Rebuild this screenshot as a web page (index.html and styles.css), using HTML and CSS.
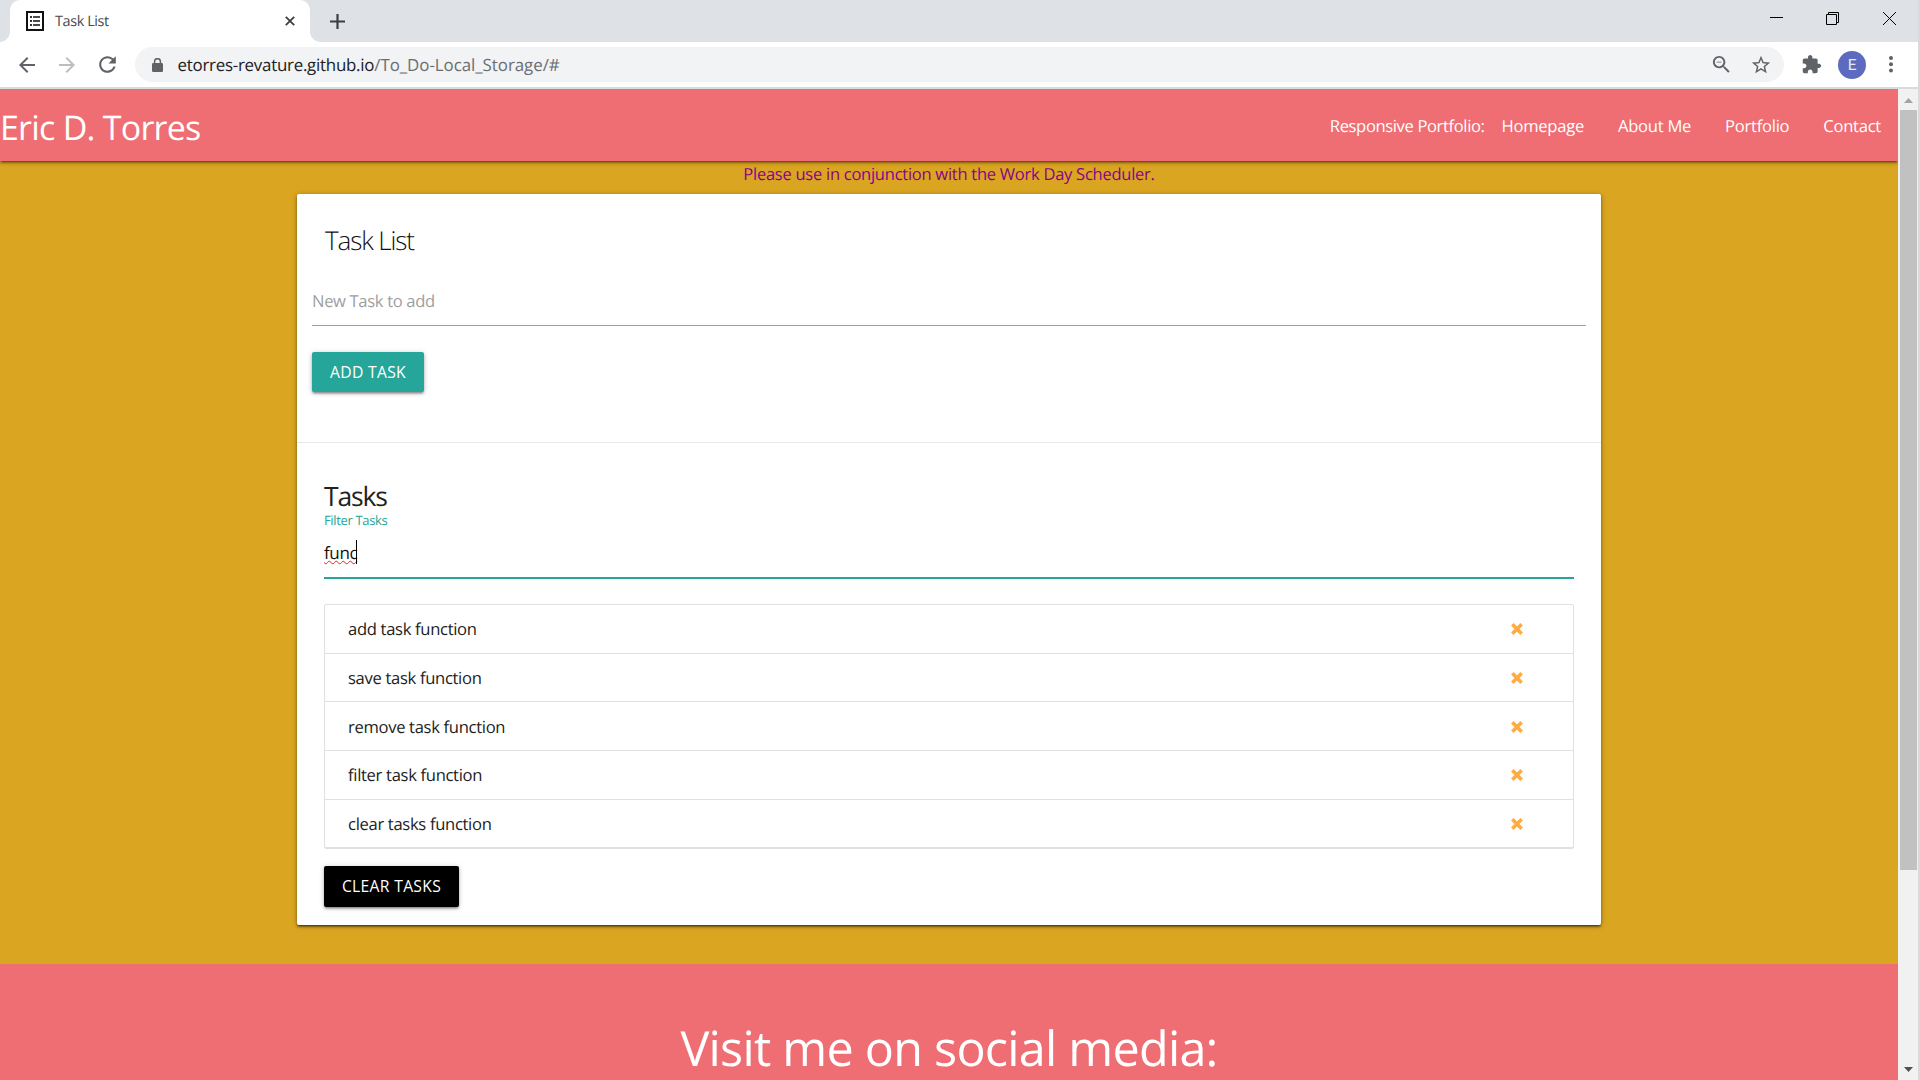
FILE: index.html
```
<!DOCTYPE html>
<html lang="en">
<head>
<meta charset="utf-8">
<title>Task List</title>
<link rel="stylesheet" href="styles.css">
</head>
<body>
<svg class="defs" width="0" height="0">
  <symbol id="times" viewBox="0 0 12 12"><path d="M2.6 2.6l6.8 6.8M9.4 2.6l-6.8 6.8" stroke="#ffab40" stroke-width="3.6" stroke-linecap="square" stroke-linejoin="round"/></symbol>
</svg>
<div class="window">
  <header class="tabstrip">
    <div class="tab">
      <svg class="favicon" width="18" height="20" viewBox="0 0 18 20"><rect x="1" y="1" width="16" height="18" fill="#fff" stroke="#111" stroke-width="2"/><path d="M4 5h2v2H4zM4 9h2v2H4zM4 13h2v2H4z" fill="#333"/><path d="M7 6h7M7 10h7M7 14h7" stroke="#111" stroke-width="1.5"/></svg>
      <span class="tab-title">Task List</span>
      <svg class="tab-close" width="10" height="10" viewBox="0 0 10 10"><path d="M.8.8l8.4 8.4M9.2.8L.8 9.2" stroke="#3c4043" stroke-width="1.8"/></svg>
    </div>
    <svg class="new-tab" width="15" height="15" viewBox="0 0 15 15"><path d="M7.5 0v15M0 7.5h15" stroke="#3c4043" stroke-width="2.2"/></svg>
    <div class="controls">
      <svg width="13" height="13" viewBox="0 0 13 13"><path d="M0 5.5h13" stroke="#000"/></svg>
      <svg width="13" height="13" viewBox="0 0 13 13" fill="none" stroke="#000"><path d="M.5 2.5h10v10H.5zM2.5 2.5v-2h10v10h-2"/></svg>
      <svg width="13" height="13" viewBox="0 0 13 13"><path d="M0 0l13 13M13 0L0 13" stroke="#000"/></svg>
    </div>
  </header>
  <div class="toolbar">
    <svg class="nav-icon" width="24" height="24" viewBox="0 0 24 24" fill="#5f6368"><path d="M20 11H7.83l5.59-5.59L12 4l-8 8 8 8 1.41-1.41L7.83 13H20v-2z"/></svg>
    <svg class="nav-icon" width="24" height="24" viewBox="0 0 24 24" fill="#bcbec1"><path d="M12 4l-1.41 1.41L16.17 11H4v2h12.17l-5.58 5.59L12 20l8-8z"/></svg>
    <svg class="nav-icon" width="25" height="25" viewBox="0 0 24 24" fill="#5f6368"><path d="M17.65 6.35C16.2 4.9 14.21 4 12 4c-4.42 0-7.99 3.58-7.99 8s3.57 8 7.99 8c3.73 0 6.84-2.55 7.73-6h-2.08c-.82 2.33-3.04 4-5.65 4-3.31 0-6-2.69-6-6s2.69-6 6-6c1.66 0 3.14.69 4.22 1.78L13 11h7V4l-2.35 2.35z"/></svg>
    <div class="omnibox">
      <svg class="lock" width="11" height="14" viewBox="0 0 11 14"><path d="M2.6 6V3.6a2.9 2.9 0 0 1 5.8 0V6" fill="none" stroke="#5f6368" stroke-width="1.5"/><rect y="5" width="11" height="9" rx="1.2" fill="#5f6368"/></svg>
      <span class="url"><span class="host">etorres-revature.github.io</span><span class="path">/To_Do-Local_Storage/#</span></span>
      <svg class="zoom" width="23" height="23" viewBox="0 0 24 24" fill="#5f6368"><path d="M15.5 14h-.79l-.28-.27C15.41 12.59 16 11.11 16 9.5 16 5.91 13.09 3 9.5 3S3 5.91 3 9.5 5.91 16 9.5 16c1.61 0 3.09-.59 4.23-1.57l.27.28v.79l5 4.99L20.49 19l-4.99-5zm-6 0C7.01 14 5 11.99 5 9.5S7.01 5 9.5 5 14 7.01 14 9.5 11.99 14 9.5 14zM7 9h5v1H7z"/></svg>
      <svg class="star" width="22" height="22" viewBox="0 0 24 24" fill="#5f6368"><path d="M22 9.24l-7.19-.62L12 2 9.19 8.63 2 9.24l5.46 4.73L5.82 21 12 17.27 18.18 21l-1.63-7.03L22 9.24zM12 15.4l-3.76 2.27 1-4.28-3.32-2.88 4.38-.38L12 6.1l1.71 4.04 4.38.38-3.32 2.88 1 4.28L12 15.4z"/></svg>
    </div>
    <svg class="ext" width="21" height="21" viewBox="0 0 24 24" fill="#5f6368"><path d="M20.5 11H19V7c0-1.1-.9-2-2-2h-4V3.5C13 2.12 11.88 1 10.5 1S8 2.12 8 3.5V5H4c-1.1 0-1.99.9-1.99 2v3.8H3.5c1.49 0 2.7 1.21 2.7 2.7s-1.21 2.7-2.7 2.7H2V20c0 1.1.9 2 2 2h3.8v-1.5c0-1.49 1.21-2.7 2.7-2.7 1.49 0 2.7 1.21 2.7 2.7V22H17c1.1 0 2-.9 2-2v-4h1.5c1.38 0 2.5-1.12 2.5-2.5S21.88 11 20.5 11z"/></svg>
    <span class="avatar">E</span>
    <svg class="menu" width="4" height="17" viewBox="0 0 4 17" fill="#5f6368"><circle cx="2" cy="2" r="2"/><circle cx="2" cy="8.3" r="2"/><circle cx="2" cy="14.6" r="2"/></svg>
  </div>
  <div class="viewport">
    <div class="page">
      <nav class="navbar">
        <span class="brand">Eric D. Torres</span>
        <ul class="links">
          <li class="lead">Responsive Portfolio:</li>
          <li class="first">Homepage</li>
          <li>About Me</li>
          <li>Portfolio</li>
          <li>Contact</li>
        </ul>
      </nav>
      <p class="notice">Please use in conjunction with the Work Day Scheduler.</p>
      <main class="card">
        <section class="add">
          <h1 class="title">Task List</h1>
          <div class="field">New Task to add</div>
          <button class="btn btn-add">Add Task</button>
        </section>
        <section class="tasks">
          <h2 class="subtitle">Tasks</h2>
          <div class="filter-label">Filter Tasks</div>
          <div class="filter"><span class="typed">func</span><span class="caret"></span></div>
          <ul class="list">
            <li><span>add task function</span><svg width="12" height="12"><use href="#times"/></svg></li>
            <li><span>save task function</span><svg width="12" height="12"><use href="#times"/></svg></li>
            <li><span>remove task function</span><svg width="12" height="12"><use href="#times"/></svg></li>
            <li><span>filter task function</span><svg width="12" height="12"><use href="#times"/></svg></li>
            <li><span>clear tasks function</span><svg width="12" height="12"><use href="#times"/></svg></li>
          </ul>
          <button class="btn btn-clear">Clear Tasks</button>
        </section>
      </main>
      <footer class="footer">Visit me on social media:</footer>
    </div>
    <div class="scrollbar">
      <svg class="up" width="9" height="5" viewBox="0 0 9 5"><path d="M0 5L4.5 0 9 5z" fill="#a3a3a3"/></svg>
      <div class="thumb"></div>
      <svg class="down" width="9" height="5" viewBox="0 0 9 5"><path d="M0 0l4.5 5L9 0z" fill="#505050"/></svg>
    </div>
  </div>
</div>
</body>
</html>
```
FILE: styles.css
```
* { box-sizing: border-box; margin: 0; padding: 0; }
body {
  width: 1920px; height: 1080px; overflow: hidden; background: #d9dadb;
  font: 400 16.6px/1.5 "Open Sans", "Noto Sans", sans-serif;
  letter-spacing: -0.35px; text-rendering: geometricPrecision;
}
ul { list-style: none; }
svg { display: block; flex: none; }
.defs { position: absolute; }
.window { width: 1918px; height: 1080px; display: flex; flex-direction: column; background: #fff; }

.tabstrip { height: 42px; flex: none; display: flex; background: #dee1e6; padding-left: 10px; }
.tab {
  width: 300px; height: 42px; background: #fff; border-radius: 10px 10px 0 0; position: relative;
  display: flex; align-items: center; padding: 0 15px 0 16px;
}
.tab::before, .tab::after { content: ""; position: absolute; bottom: 0; width: 10px; height: 10px; }
.tab::before { left: -10px; background: radial-gradient(circle at 0 0, transparent 9.5px, #fff 10px); }
.tab::after { right: -10px; background: radial-gradient(circle at 100% 0, transparent 9.5px, #fff 10px); }
.tab-title { font-size: 14.4px; line-height: 43px; letter-spacing: -0.38px; color: #45494d; margin-left: 11px; flex: 1; }
.new-tab { margin: 13.5px 0 0 20px; }
.controls { margin: 12px 22px 0 auto; display: flex; }
.controls svg + svg { margin-left: 43px; }
.controls svg:last-child { margin-left: 44px; }

.toolbar { height: 47px; flex: none; display: flex; align-items: center; padding: 0 25px 2px 15px; box-shadow: inset 0 -2px #d8dadd; }
.nav-icon { margin-right: 16px; }
.nav-icon:nth-child(3) { margin-right: 15px; }
.omnibox { flex: 1; height: 35px; border-radius: 17.5px; background: #f1f3f4; display: flex; align-items: center; padding: 0 12px 0 17px; }
.url { flex: 1; margin-left: 14.5px; font-size: 16.9px; line-height: 34px; color: #6a6e72; }
.host { color: #202124; letter-spacing: -0.25px; }
.path { letter-spacing: -0.05px; }
.zoom { margin-right: 17.5px; }
.ext { margin: 0 12px 0 17px; }
.avatar {
  width: 28px; height: 28px; margin: 0 23px 0 4px; border-radius: 50%; background: #5c6bc0; color: #e8eaf6;
  font: 15.5px/28px Roboto, sans-serif; text-align: center;
}

.viewport { flex: 1; display: flex; min-height: 0; }
.page { width: 1898px; background: #daa520; display: flex; flex-direction: column; align-items: center; overflow: hidden; }
.navbar {
  width: 1898px; height: 72px; flex: none; display: flex; justify-content: space-between; align-items: center;
  background: #ee6e73; color: #fff; padding-right: 17px;
  box-shadow: 0 2px 2px rgba(0,0,0,.25), 0 3px 1px -2px rgba(0,0,0,.2), 0 1px 5px rgba(0,0,0,.3);
}
.brand { font-size: 34px; line-height: 70px; letter-spacing: -0.77px; padding-top: 3px; }
.links { display: flex; line-height: 73px; }
.links li { margin-left: 34px; letter-spacing: -0.27px; }
.links .lead { letter-spacing: -0.38px; }
.links .first { margin-left: 17px; }
.notice { line-height: 26px; color: #8b008b; letter-spacing: -0.3px; flex: none; }

.card {
  width: 1304px; height: 731px; flex: none; margin-top: 7px; background: #fff; border-radius: 2px;
  box-shadow: 0 2px 2px rgba(0,0,0,.3), 0 3px 1px -2px rgba(0,0,0,.25), 0 1px 5px rgba(0,0,0,.35);
}
.add { height: 249px; border-bottom: 1px solid #e8e8e8; padding: 28px 15px 0; }
.title { font-size: 26px; line-height: 36px; font-weight: 300; letter-spacing: -1.1px; color: #111; padding-left: 13px; }
.field { height: 44px; margin-top: 24px; border-bottom: 1px solid #9e9e9e; line-height: 37px; color: #9e9e9e; }
.btn {
  display: block; border: 0; border-radius: 2px; color: #fff; text-transform: uppercase;
  font: 400 15.7px/40px "Open Sans", sans-serif; letter-spacing: .3px; text-align: center;
  box-shadow: 0 2px 2px rgba(0,0,0,.2), 0 3px 1px -2px rgba(0,0,0,.12), 0 1px 5px rgba(0,0,0,.25);
}
.btn-add { width: 112px; height: 40px; margin-top: 26px; background: #26a69a; }
.tasks { padding: 36px 27px 0; }
.subtitle { font-size: 26.5px; line-height: 34px; font-weight: 400; letter-spacing: -1.15px; color: #212121; }
.filter-label { font-size: 13px; line-height: 14px; letter-spacing: -0.35px; color: #26a69a; }
.filter { height: 52px; border-bottom: 2px solid #26a69a; padding-top: 1px; display: flex; line-height: 50px; font-size: 17px; }
.typed { text-decoration: underline wavy #f02020 1px; text-underline-offset: 1px; text-decoration-skip-ink: none; color: #111; }
.caret { width: 1px; height: 24px; margin: 12px 0 0 -1px; background: #000; }
.list { margin-top: 25px; border: 1px solid #e0e0e0; border-radius: 2px; }
.list li {
  height: 48.67px; border-bottom: 1px solid #e0e0e0; display: flex; align-items: center; justify-content: space-between;
  padding: 1px 50px 0 23px; color: #212121; line-height: 48px; letter-spacing: -0.32px;
}
.btn-clear { width: 135px; height: 41px; margin-top: 16.65px; background: #000; }
.footer {
  width: 100%; height: 200px; flex: none; margin-top: 39px; padding-top: 54px; background: #ee6e73; color: #fff;
  font-size: 48.5px; line-height: 60px; letter-spacing: -0.75px; text-align: center;
}

.scrollbar { width: 20px; height: 991px; background: #f1f1f1; display: flex; flex-direction: column; padding: 9px 1px 8px 2px; align-items: center; }
.thumb { width: 17px; height: 760px; margin-top: 7px; background: #c1c1c1; }
.down { margin-top: auto; }
```
